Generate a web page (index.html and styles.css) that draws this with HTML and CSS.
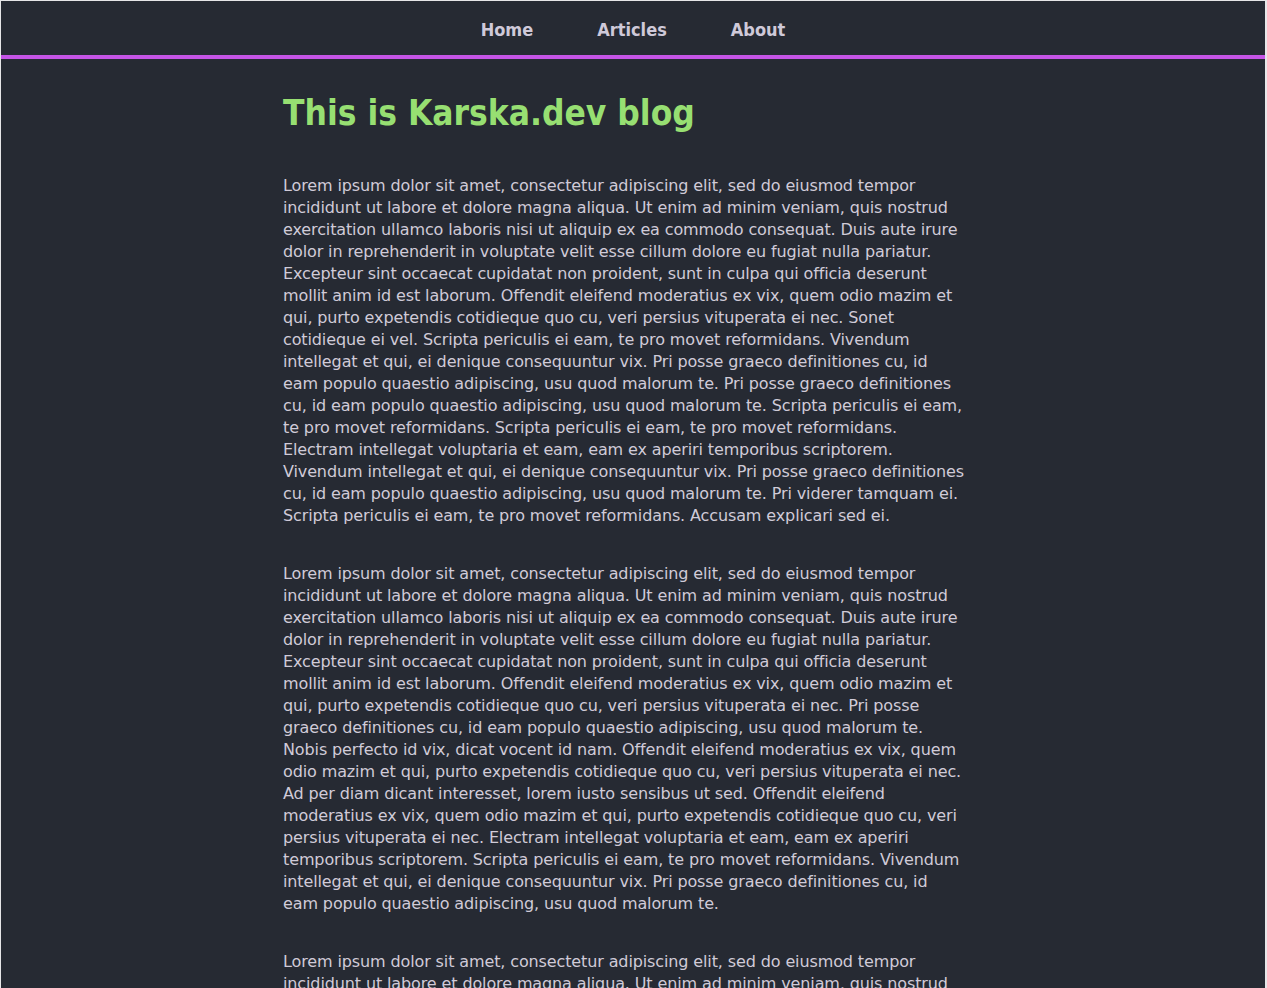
FILE: index.html
```html
<!DOCTYPE html>
<html lang="en">
<head>
<meta charset="utf-8">
<title>Karska.dev</title>
<link rel="stylesheet" href="styles.css">
</head>
<body>
<header class="site-header">
  <nav class="nav">
    <a class="nav-link" href="#">Home</a>
    <a class="nav-link" href="#">Articles</a>
    <a class="nav-link" href="#">About</a>
  </nav>
</header>
<main class="content">
  <h1 class="title">This is Karska.dev blog</h1>
  <p class="para">Lorem ipsum dolor sit amet, consectetur adipiscing elit, sed do eiusmod tempor incididunt ut labore et dolore magna aliqua. Ut enim ad minim veniam, quis nostrud exercitation ullamco laboris nisi ut aliquip ex ea commodo consequat. Duis aute irure dolor in reprehenderit in voluptate velit esse cillum dolore eu fugiat nulla pariatur. Excepteur sint occaecat cupidatat non proident, sunt in culpa qui officia deserunt mollit anim id est laborum. Offendit eleifend moderatius ex vix, quem odio mazim et qui, purto expetendis cotidieque quo cu, veri persius vituperata ei nec. Sonet cotidieque ei vel. Scripta periculis ei eam, te pro movet reformidans. Vivendum intellegat et qui, ei denique consequuntur vix. Pri posse graeco definitiones cu, id eam populo quaestio adipiscing, usu quod malorum te. Pri posse graeco definitiones cu, id eam populo quaestio adipiscing, usu quod malorum te. Scripta periculis ei eam, te pro movet reformidans. Scripta periculis ei eam, te pro movet reformidans. Electram intellegat voluptaria et eam, eam ex aperiri temporibus scriptorem. Vivendum intellegat et qui, ei denique consequuntur vix. Pri posse graeco definitiones cu, id eam populo quaestio adipiscing, usu quod malorum te. Pri viderer tamquam ei. Scripta periculis ei eam, te pro movet reformidans. Accusam explicari sed ei.</p>
  <p class="para">Lorem ipsum dolor sit amet, consectetur adipiscing elit, sed do eiusmod tempor incididunt ut labore et dolore magna aliqua. Ut enim ad minim veniam, quis nostrud exercitation ullamco laboris nisi ut aliquip ex ea commodo consequat. Duis aute irure dolor in reprehenderit in voluptate velit esse cillum dolore eu fugiat nulla pariatur. Excepteur sint occaecat cupidatat non proident, sunt in culpa qui officia deserunt mollit anim id est laborum. Offendit eleifend moderatius ex vix, quem odio mazim et qui, purto expetendis cotidieque quo cu, veri persius vituperata ei nec. Pri posse graeco definitiones cu, id eam populo quaestio adipiscing, usu quod malorum te. Nobis perfecto id vix, dicat vocent id nam. Offendit eleifend moderatius ex vix, quem odio mazim et qui, purto expetendis cotidieque quo cu, veri persius vituperata ei nec. Ad per diam dicant interesset, lorem iusto sensibus ut sed. Offendit eleifend moderatius ex vix, quem odio mazim et qui, purto expetendis cotidieque quo cu, veri persius vituperata ei nec. Electram intellegat voluptaria et eam, eam ex aperiri temporibus scriptorem. Scripta periculis ei eam, te pro movet reformidans. Vivendum intellegat et qui, ei denique consequuntur vix. Pri posse graeco definitiones cu, id eam populo quaestio adipiscing, usu quod malorum te.</p>
  <p class="para">Lorem ipsum dolor sit amet, consectetur adipiscing elit, sed do eiusmod tempor incididunt ut labore et dolore magna aliqua. Ut enim ad minim veniam, quis nostrud exercitation ullamco laboris nisi ut aliquip ex ea commodo consequat. Duis aute irure dolor in reprehenderit in voluptate velit esse cillum dolore eu fugiat nulla pariatur.</p>
</main>
</body>
</html>
```

FILE: styles.css
```css
html {
  background: #e6e6e8;
}

body {
  margin: 1px 2px 0 1px;
  background: #262a33;
  color: #d0cbd8;
  font-family: "DejaVu Sans", sans-serif;
  font-size: 16px;
  line-height: 22px;
  letter-spacing: -0.12px;
  min-height: 987px;
}

.site-header {
  height: 54px;
  border-bottom: 4px solid #c454e6;
  display: flex;
  align-items: center;
  justify-content: center;
}

.nav {
  display: flex;
  gap: 64px;
}

.nav-link {
  color: #cfc9d9;
  text-decoration: none;
  font-family: "DejaVu Sans Condensed", "DejaVu Sans", sans-serif;
  font-weight: bold;
  font-size: 18px;
  line-height: 22px;
  letter-spacing: 0;
  margin-top: 3px;
}

.content {
  max-width: 681px;
  margin: 0 auto;
  padding: 32px 19px 0 0;
}

.title {
  margin: 0 0 40px;
  color: #97df72;
  font-family: "DejaVu Sans Condensed", "DejaVu Sans", sans-serif;
  font-size: 35px;
  line-height: 44px;
  font-weight: bold;
  letter-spacing: 0;
}

.para {
  margin: 0 0 36px;
}
```
